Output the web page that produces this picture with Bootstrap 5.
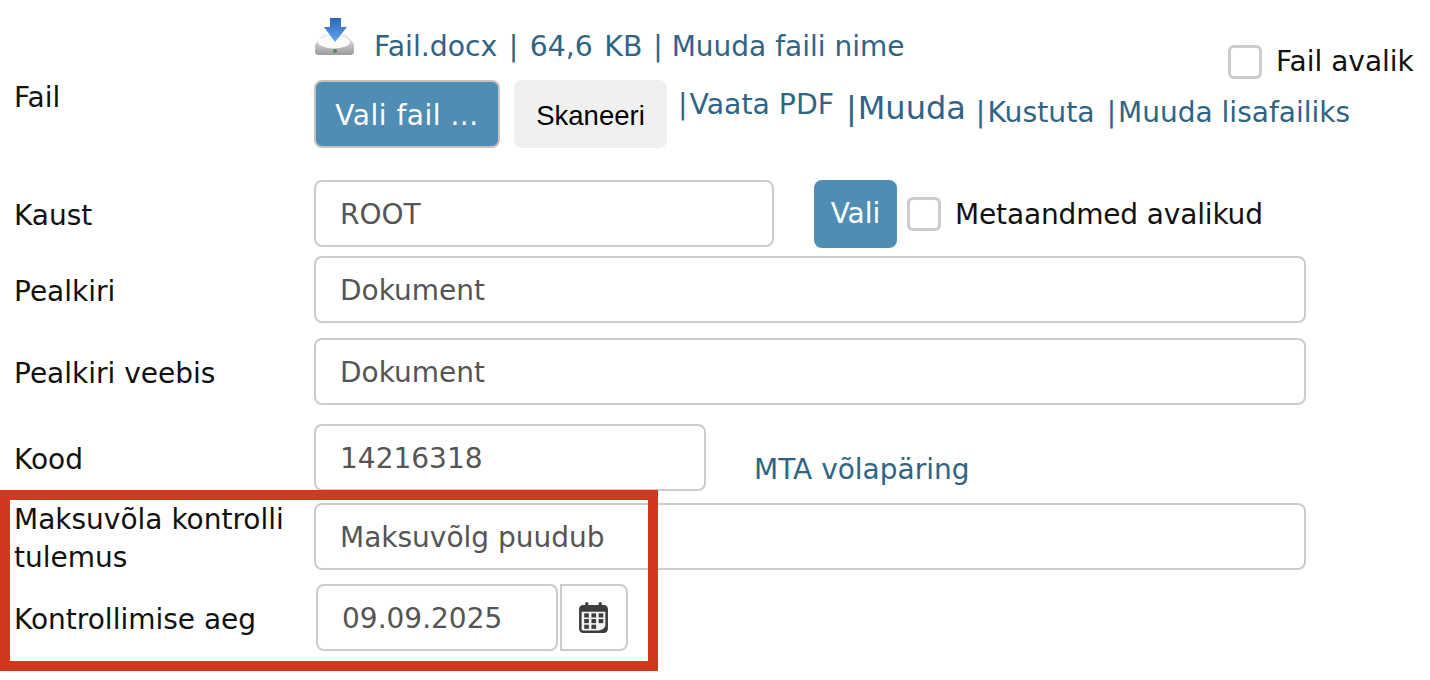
<!DOCTYPE html>
<html lang="et"><head><meta charset="utf-8"><title>Fail</title>
<link href="https://cdn.jsdelivr.net/npm/bootstrap@5.3.0/dist/css/bootstrap.min.css" rel="stylesheet">
<style>
html,body{height:680px;overflow:hidden}
body{font-family:"DejaVu Sans",Verdana,sans-serif;font-size:28px;color:#111;background:#fff;position:relative}
a{color:#2f6485;text-decoration:none;font-size:28.3px}
.frm-row{display:flex;align-items:center}
.frm-label{width:314px;padding-left:14px;padding-top:4px;flex:none;line-height:38px}
.frm-label-file{padding-top:15px}
.frm-input{height:67px;border:2px solid #ccc;border-radius:8px;padding:2px 24px 0;display:flex;align-items:center;color:#555;background:#fff}
.w-full{width:992px}.w-kaust{width:460px}.w-kood{width:392px}.w-date{width:242px}
.r-file{height:180px}.r-kaust{height:67px;margin-bottom:9px}.r-title{height:67px;margin-bottom:15px}.r-web{height:67px;margin-bottom:19px}.r-kood{height:67px;margin-bottom:12px}.r-maksu{height:67px;margin-bottom:14px}
.file-col{width:1115px;position:relative;height:180px}
.file-top{display:flex;align-items:flex-end;height:68px}
.file-top svg{margin-right:19px;margin-bottom:11px;flex:none}
.lnk-size{word-spacing:2.5px}
.lnk-ren{margin-left:11px;font-size:28px}
.file-btns{display:flex;margin-top:12px;align-items:center}
.btn-blue{background:#4f8db3;color:#fff;border-radius:8px;display:inline-flex;align-items:center;justify-content:center}
.btn-pick{width:186px;height:68px;border:2px solid #c4c4c4;letter-spacing:.5px;padding-top:3px}
.btn-vali{width:83px;height:68px;margin-left:40px}
.btn-scan{width:153px;height:68px;background:#f0f0f0;border-radius:8px;margin-left:14px;padding-top:3px;font:27.5px "Liberation Sans",Arial,sans-serif;color:#000;display:inline-flex;align-items:center;justify-content:center}
.chk{width:34px;height:34px;border:3px solid #ccc;border-radius:6px;background:#fff;display:inline-block;flex:none}
.chk-meta{margin-left:10px;margin-right:14px}
.txt-meta{letter-spacing:-.15px;padding-top:2px}
.pub{position:absolute;left:914px;top:41px;display:flex;align-items:center;gap:14px}
.pipe{margin-right:2px}
.pipe-b{margin-right:1px}
.lnk-a{margin-left:11px;margin-bottom:17px}.lnk-b{margin-left:12px;font-size:32px;margin-bottom:12px}.lnk-c{margin-left:10px}.lnk-d{margin-left:12px;font-size:28px}
.lnk-c,.lnk-d{margin-bottom:2px}
.lnk-mta{margin-left:48px;margin-top:24px;font-size:28px}
.cal{width:68px;height:67px;border:2px solid #ccc;border-radius:0 8px 8px 0;margin-left:2px;display:flex;align-items:center;justify-content:center;padding:0 2px 0 0}
.d-in{margin-left:2px}
.red-box{position:absolute;left:0;top:490px;width:658px;height:181px;border:10px solid #d0391f;pointer-events:none}
</style></head><body>
<div class="frm-row r-file">
 <div class="frm-label frm-label-file">Fail</div>
 <div class="file-col">
  <div class="file-top">
   <svg width="41" height="39" viewBox="0 0 41 39"><defs><linearGradient id="gr" x1="0" y1="0" x2="0" y2="1"><stop offset="0" stop-color="#f2f2f2"/><stop offset="1" stop-color="#9a9a9a"/></linearGradient><linearGradient id="ar" x1="0" y1="0" x2="0" y2="1"><stop offset="0" stop-color="#2f66b8"/><stop offset="1" stop-color="#62a4f0"/></linearGradient></defs><path d="M1 27 9 16H32L40 26V34Q40 37 36 37H5Q1 37 1 34Z" fill="url(#gr)"/><ellipse cx="20" cy="24" rx="16" ry="6.5" fill="#fbfbfb"/><circle cx="21" cy="33" r="2" fill="#4a8a50"/><path d="M16 0H27V9H33L21 24 10 9H16Z" fill="url(#ar)"/></svg>
   <a href="#" class="lnk-size">Fail.docx | 64,6 KB</a><a href="#" class="lnk-ren">| Muuda faili nime</a>
  </div>
  <div class="file-btns">
   <span class="btn-blue btn-pick">Vali fail ...</span><span class="btn-scan">Skaneeri</span>
   <a href="#" class="lnk-a"><span class="pipe">|</span>Vaata PDF</a><a href="#" class="lnk-b"><span class="pipe-b">|</span>Muuda</a><a href="#" class="lnk-c"><span class="pipe">|</span>Kustuta</a><a href="#" class="lnk-d"><span class="pipe">|</span>Muuda lisafailiks</a>
  </div>
  <div class="pub"><span class="chk"></span><span>Fail avalik</span></div>
 </div>
</div>
<div class="frm-row r-kaust">
 <div class="frm-label">Kaust</div><div class="frm-input w-kaust">ROOT</div>
 <span class="btn-blue btn-vali">Vali</span>
 <span class="chk chk-meta"></span><span class="txt-meta">Metaandmed avalikud</span>
</div>
<div class="frm-row r-title"><div class="frm-label">Pealkiri</div><div class="frm-input w-full">Dokument</div></div>
<div class="frm-row r-web"><div class="frm-label">Pealkiri veebis</div><div class="frm-input w-full">Dokument</div></div>
<div class="frm-row r-kood"><div class="frm-label">Kood</div><div class="frm-input w-kood">14216318</div><a href="#" class="lnk-mta">MTA võlapäring</a></div>
<div class="frm-row r-maksu"><div class="frm-label">Maksuvõla kontrolli tulemus</div><div class="frm-input w-full">Maksuvõlg puudub</div></div>
<div class="frm-row"><div class="frm-label">Kontrollimise aeg</div><div class="frm-input w-date d-in">09.09.2025</div>
 <div class="cal"><svg width="31" height="32" viewBox="0 0 30 31"><rect x="1" y="3" width="28" height="27" rx="4" fill="#3d3d3d"/><path d="M3.5 9.5H26.5V23Q25 27 20 27.5H4.5Q3.5 27.5 3.5 26.5Z" fill="#f4f4f4"/><rect x="7" y="0" width="3" height="6" rx="1.5" fill="#3d3d3d"/><rect x="20" y="0" width="3" height="6" rx="1.5" fill="#3d3d3d"/><g fill="#3d3d3d"><rect x="6" y="11" width="4.5" height="4"/><rect x="13" y="11" width="4.5" height="4"/><rect x="20" y="11" width="4.5" height="4"/><rect x="6" y="16.5" width="4.5" height="4"/><rect x="13" y="16.5" width="4.5" height="4"/><rect x="20" y="16.5" width="4.5" height="4"/><rect x="6" y="22" width="4.5" height="4"/><rect x="13" y="22" width="4.5" height="4"/></g></svg></div>
</div>
<div class="red-box"></div>
<script src="https://cdn.jsdelivr.net/npm/bootstrap@5.3.0/dist/js/bootstrap.bundle.min.js"></script>
</body></html>
